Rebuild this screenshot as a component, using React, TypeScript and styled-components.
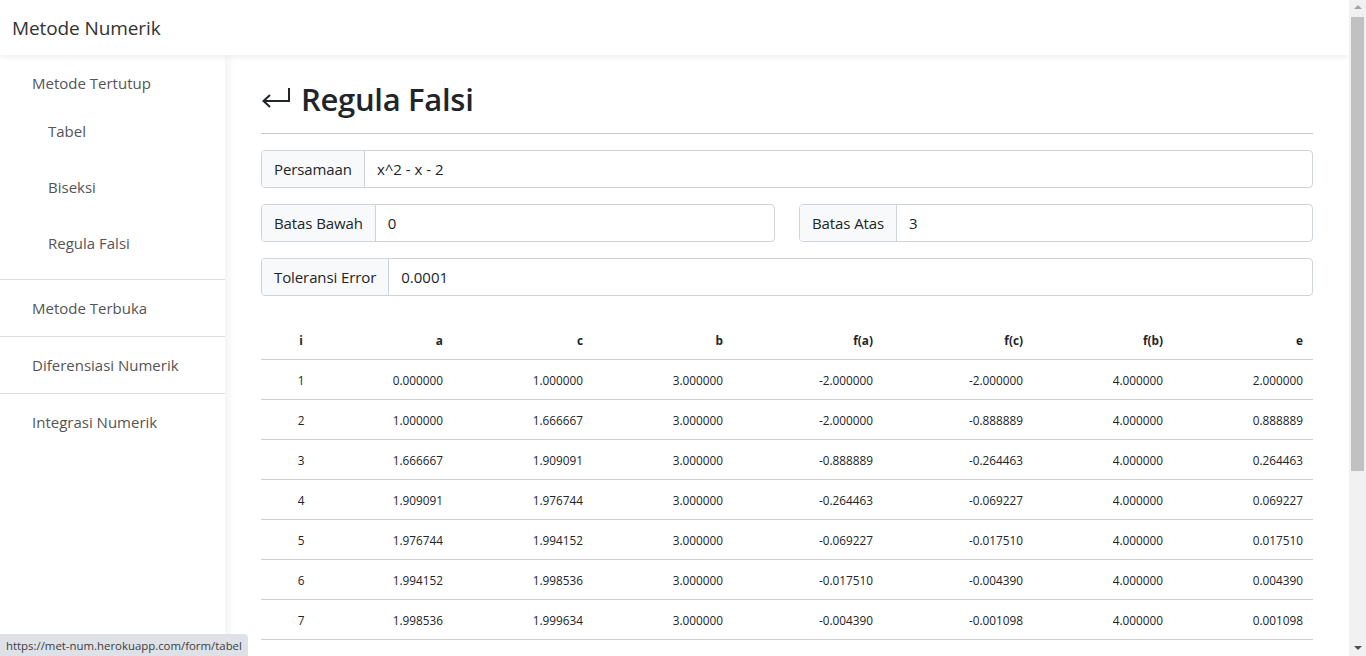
import React from "react";
import styled, { createGlobalStyle } from "styled-components";

const FONT = `"Open Sans", "Noto Sans", "Liberation Sans", sans-serif`;

const GlobalStyle = createGlobalStyle`
  html, body {
    margin: 0;
    padding: 0;
    height: 100%;
    overflow: hidden;
    background: #fff;
    font-family: ${FONT};
    color: #212529;
  }
  *, *::before, *::after { box-sizing: border-box; }
`;

const Window = styled.div`
  display: flex;
  height: 100vh;
  overflow: hidden;
`;

const Page = styled.div`
  flex: 1;
  min-width: 0;
  height: 100vh;
  overflow: hidden;
`;

/* drawn browser scrollbar */
const ScrollBar = styled.div`
  width: 17px;
  flex: none;
  display: flex;
  flex-direction: column;
  background: #f1f1f1;
`;

const ScrollButton = styled.div<{ $down?: boolean }>`
  height: 17px;
  flex: none;
  display: flex;
  justify-content: center;
  align-items: center;
  &::after {
    content: "";
    width: 0;
    height: 0;
    border-left: 4px solid transparent;
    border-right: 4px solid transparent;
    ${(p) =>
      p.$down
        ? "border-top: 4px solid #505050; margin-top: 0;"
        : "border-bottom: 4px solid #a3a3a3; margin-top: -3px;"}
  }
`;

const Track = styled.div`
  flex: 1;
  display: flex;
  flex-direction: column;
`;

const Thumb = styled.div`
  height: 454px;
  margin: 0 2px;
  background: #c1c1c1;
`;

const Navbar = styled.header`
  height: 55px;
  display: flex;
  align-items: center;
  padding: 0 12px;
  background: #fff;
  box-shadow: 0 2px 5px rgba(0, 0, 0, 0.07);
  position: relative;
  z-index: 2;
`;

const Brand = styled.div`
  font-size: 19px;
  color: #333;
  letter-spacing: -0.1px;
`;

const Layout = styled.div`
  display: flex;
  align-items: stretch;
  min-height: 844px;
`;

const Sidebar = styled.nav`
  width: 225px;
  flex: none;
  background: #fff;
  box-shadow: 3px 0 10px rgba(0, 0, 0, 0.06);
  position: relative;
  z-index: 1;
  display: flex;
  flex-direction: column;
`;

const NavGroup = styled.div`
  padding-bottom: 8px;
  border-bottom: 1px solid #dedede;
`;

const NavHeader = styled.div`
  padding: 16px 32px 8px;
  font-size: 15px;
  line-height: 24px;
  color: #555;
`;

const NavLink = styled.div<{ $indent?: boolean; $last?: boolean }>`
  height: ${(p) => (p.$indent || p.$last ? "56px" : "57px")};
  display: flex;
  align-items: center;
  padding-left: ${(p) => (p.$indent ? "48px" : "32px")};
  font-size: 15px;
  color: #555;
  border-bottom: ${(p) => (p.$indent || p.$last ? "none" : "1px solid #dedede")};
`;

const Main = styled.main`
  flex: 1;
  padding: 24px 36px 40px;
  min-width: 0;
`;

const TitleRow = styled.div`
  display: flex;
  align-items: center;
  gap: 10px;
  height: 38px;
  padding-top: 2px;
`;

const Title = styled.h1`
  margin: 0;
  font-size: 31px;
  font-weight: 600;
  color: #212529;
  letter-spacing: -0.3px;
`;

const Rule = styled.hr`
  margin: 16px 0 16px;
  border: 0;
  border-top: 1px solid #c8c8c8;
`;

const Form = styled.div`
  display: flex;
  flex-direction: column;
  gap: 16px;
`;

const Row = styled.div`
  display: grid;
  grid-template-columns: 1fr 1fr;
  gap: 24px;
`;

const InputGroup = styled.div`
  display: flex;
  height: 38px;
  border: 1px solid #ced4da;
  border-radius: 4px;
  overflow: hidden;
  background: #fff;
`;

const Addon = styled.span`
  display: flex;
  align-items: center;
  padding: 0 12px;
  background: #f8f9fa;
  border-right: 1px solid #ced4da;
  font-size: 15px;
  letter-spacing: -0.1px;
  color: #212529;
  white-space: nowrap;
`;

const Value = styled.span`
  display: flex;
  align-items: center;
  padding: 0 12px;
  font-size: 15px;
  color: #212529;
`;

const Table = styled.table`
  margin-top: 24px;
  width: 100%;
  border-collapse: separate;
  border-spacing: 0;
  table-layout: fixed;
  font-size: 11.8px;
  color: #212529;
`;

const Th = styled.th<{ $center?: boolean }>`
  height: 40px;
  padding: 0 10px;
  text-align: ${(p) => (p.$center ? "center" : "right")};
  font-weight: 700;
  border-bottom: 1px solid #cfcfcf;
`;

const Td = styled.td<{ $center?: boolean }>`
  height: 40px;
  padding: 0 10px;
  text-align: ${(p) => (p.$center ? "center" : "right")};
  border-bottom: 1px solid #cfcfcf;
`;

const StatusBar = styled.div`
  position: fixed;
  left: 0;
  bottom: 0;
  height: 22px;
  display: flex;
  align-items: center;
  padding: 0 6px;
  background: #dee1e6;
  border-top-right-radius: 4px;
  font-size: 11.4px;
  color: #3c4043;
  z-index: 5;
`;

const ReturnIcon = () => (
  <svg width="30" height="26" viewBox="0 0 30 26" fill="none" stroke="#212529" strokeWidth="2">
    <path d="M28 2 V15 H3" />
    <path d="M9 9 L2.5 15 L9 21" strokeLinejoin="miter" />
  </svg>
);

const widths = [80, 112, 140, 140, 150, 150, 140, 140];
const headers = ["i", "a", "c", "b", "f(a)", "f(c)", "f(b)", "e"];
const rows: string[][] = [
  ["1", "0.000000", "1.000000", "3.000000", "-2.000000", "-2.000000", "4.000000", "2.000000"],
  ["2", "1.000000", "1.666667", "3.000000", "-2.000000", "-0.888889", "4.000000", "0.888889"],
  ["3", "1.666667", "1.909091", "3.000000", "-0.888889", "-0.264463", "4.000000", "0.264463"],
  ["4", "1.909091", "1.976744", "3.000000", "-0.264463", "-0.069227", "4.000000", "0.069227"],
  ["5", "1.976744", "1.994152", "3.000000", "-0.069227", "-0.017510", "4.000000", "0.017510"],
  ["6", "1.994152", "1.998536", "3.000000", "-0.017510", "-0.004390", "4.000000", "0.004390"],
  ["7", "1.998536", "1.999634", "3.000000", "-0.004390", "-0.001098", "4.000000", "0.001098"],
  ["8", "1.999634", "1.999908", "3.000000", "-0.001098", "-0.000275", "4.000000", "0.000275"],
  ["9", "1.999908", "1.999977", "3.000000", "-0.000275", "-0.000069", "4.000000", "0.000069"],
];

export default function App() {
  return (
    <>
      <GlobalStyle />
      <Window>
        <Page>
          <Navbar>
            <Brand>Metode Numerik</Brand>
          </Navbar>
          <Layout>
            <Sidebar>
              <NavGroup>
                <NavHeader>Metode Tertutup</NavHeader>
                <NavLink $indent>Tabel</NavLink>
                <NavLink $indent>Biseksi</NavLink>
                <NavLink $indent>Regula Falsi</NavLink>
              </NavGroup>
              <NavLink>Metode Terbuka</NavLink>
              <NavLink>Diferensiasi Numerik</NavLink>
              <NavLink $last>Integrasi Numerik</NavLink>
            </Sidebar>
            <Main>
              <TitleRow>
                <ReturnIcon />
                <Title>Regula Falsi</Title>
              </TitleRow>
              <Rule />
              <Form>
                <InputGroup>
                  <Addon>Persamaan</Addon>
                  <Value>x^2 - x - 2</Value>
                </InputGroup>
                <Row>
                  <InputGroup>
                    <Addon>Batas Bawah</Addon>
                    <Value>0</Value>
                  </InputGroup>
                  <InputGroup>
                    <Addon>Batas Atas</Addon>
                    <Value>3</Value>
                  </InputGroup>
                </Row>
                <InputGroup>
                  <Addon>Toleransi Error</Addon>
                  <Value>0.0001</Value>
                </InputGroup>
              </Form>
              <Table>
                <colgroup>
                  {widths.map((w, i) => (
                    <col key={i} style={{ width: w }} />
                  ))}
                </colgroup>
                <thead>
                  <tr>
                    {headers.map((h, i) => (
                      <Th key={h} $center={i === 0}>
                        {h}
                      </Th>
                    ))}
                  </tr>
                </thead>
                <tbody>
                  {rows.map((r) => (
                    <tr key={r[0]}>
                      {r.map((v, i) => (
                        <Td key={i} $center={i === 0}>
                          {v}
                        </Td>
                      ))}
                    </tr>
                  ))}
                </tbody>
              </Table>
            </Main>
          </Layout>
        </Page>
        <ScrollBar>
          <ScrollButton />
          <Track>
            <Thumb />
          </Track>
          <ScrollButton $down />
        </ScrollBar>
      </Window>
      <StatusBar>https://met-num.herokuapp.com/form/tabel</StatusBar>
    </>
  );
}
